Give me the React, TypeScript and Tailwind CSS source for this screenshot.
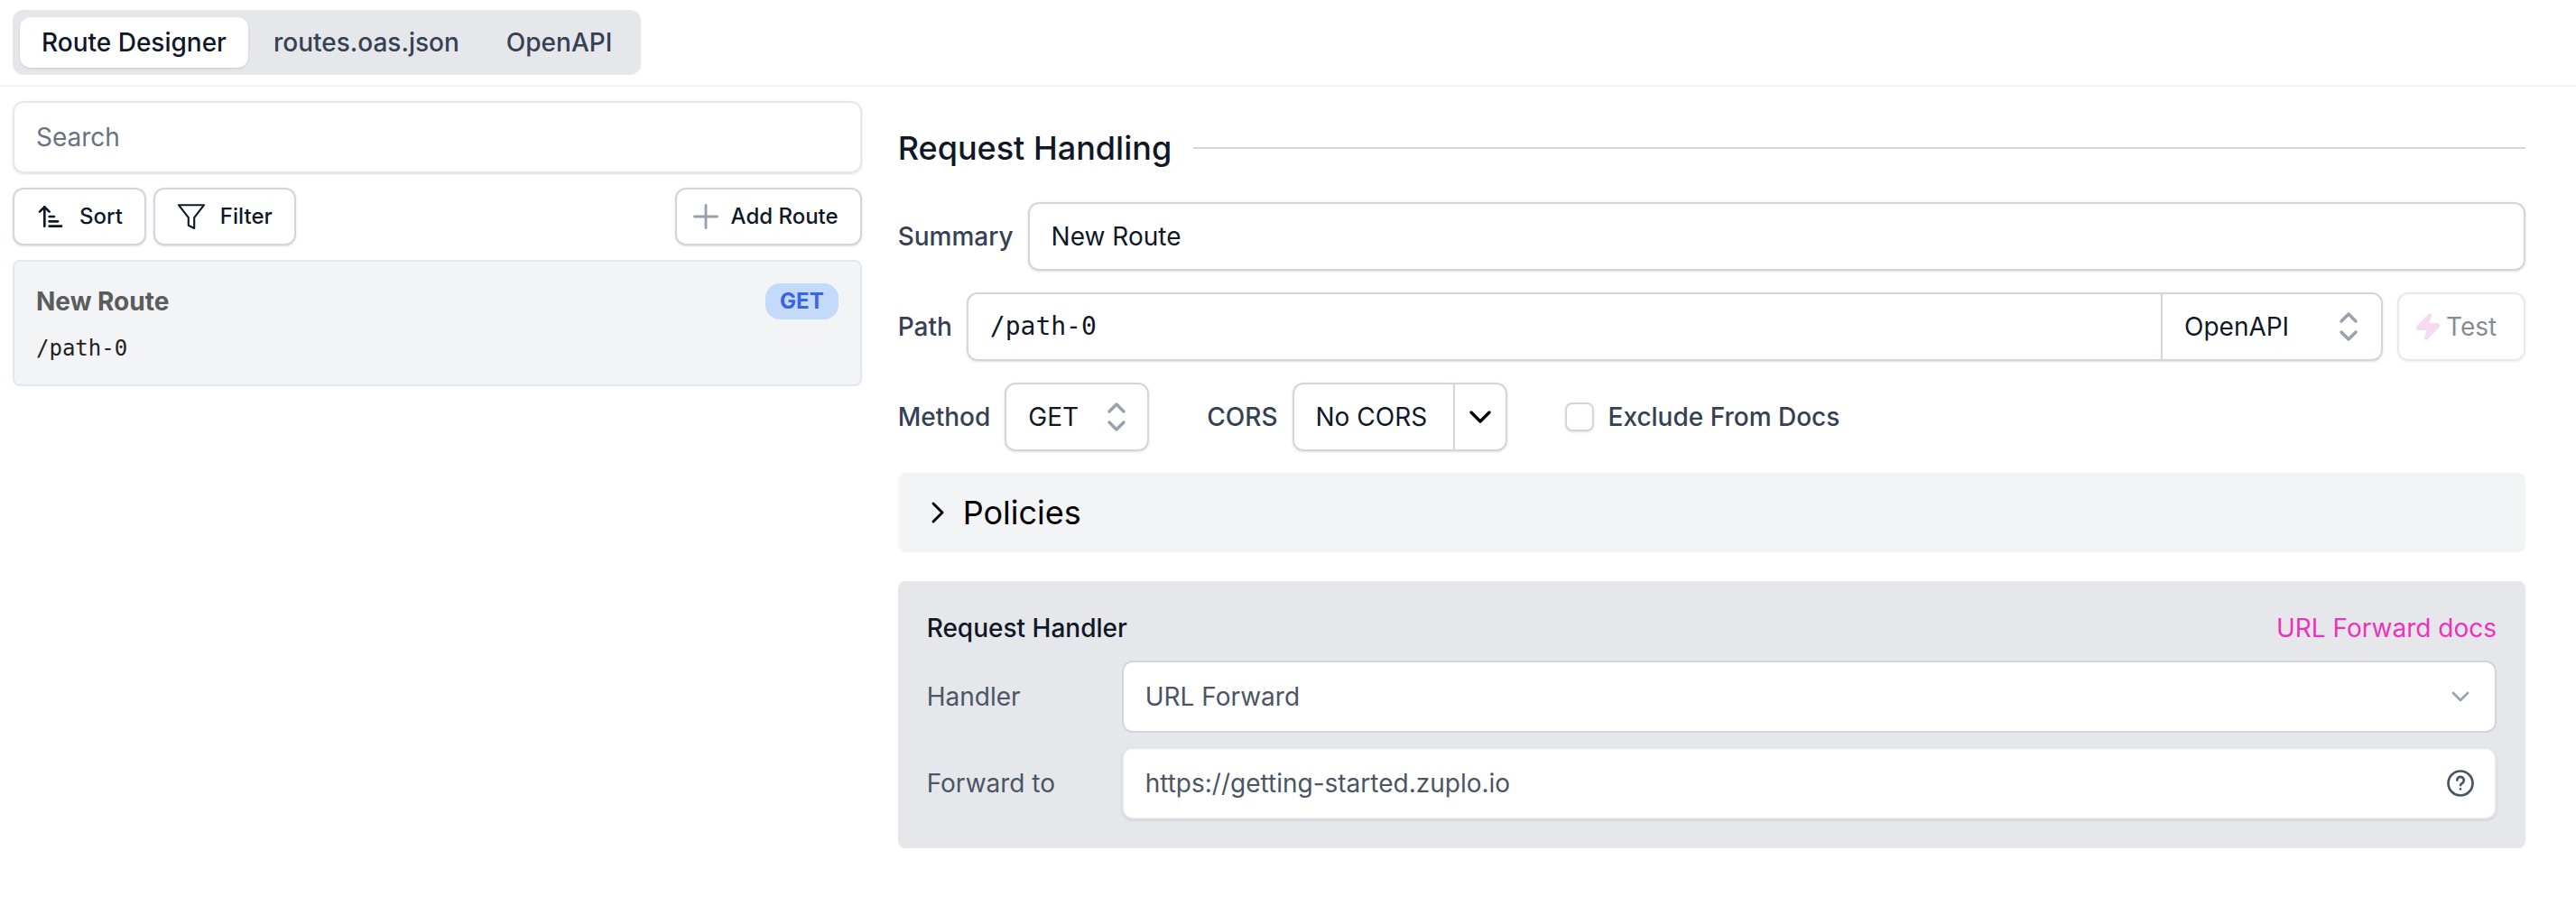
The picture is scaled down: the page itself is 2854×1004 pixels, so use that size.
import { useState } from 'react'
import type { ReactNode } from 'react'
import { ArrowUpNarrowWide, ChevronDown, ChevronRight, Zap } from 'lucide-react'

const tabs = ['Route Designer', 'routes.oas.json', 'OpenAPI']

const Selector = () => (
  <svg
    viewBox="0 0 24 24"
    fill="none"
    stroke="currentColor"
    strokeWidth="1.75"
    strokeLinecap="round"
    strokeLinejoin="round"
    className="pointer-events-none absolute right-3 top-1/2 h-12 w-12 -translate-y-1/2 text-gray-400"
  >
    <path d="M8 9l4-4 4 4M16 15l-4 4-4-4" />
  </svg>
)

const FilterIcon = () => (
  <svg viewBox="0 0 15 15" fill="none" stroke="currentColor" strokeLinejoin="round" className="mr-4 h-8 w-8">
    <path d="M.9 1.5h13.2L9 8v5.6l-3-1.5V8z" />
  </svg>
)

const PlusIcon = () => (
  <svg viewBox="0 0 24 24" fill="none" stroke="currentColor" strokeWidth="1.75" strokeLinecap="round" className="-ml-3 mr-2 h-10 w-10 text-gray-400">
    <path d="M12 4.5v15m7.5-7.5h-15" />
  </svg>
)

const ToolButton = ({ icon, children }: { icon: ReactNode; children: ReactNode }) => (
  <button className="flex h-16 items-center rounded-xl border-2 border-gray-300 bg-white px-6 text-2xl font-medium text-gray-900 shadow-sm">
    {icon}
    {children}
  </button>
)

const App = () => {
  const [tab, setTab] = useState(tabs[0]);
  const [summary, setSummary] = useState('New Route');
  const [path, setPath] = useState('/path-0');
  const [forwardTo, setForwardTo] = useState('https://getting-started.zuplo.io');

  return (
    <div className="bg-white font-['Inter',sans-serif] text-[28px] leading-10 text-gray-900">
      <header className="flex border-b-2 border-gray-100 px-3.5 py-[11px]">
        <nav className="flex gap-1 rounded-xl bg-gray-200 p-2">
          {tabs.map((t) => (
            <button
              key={t}
              onClick={() => setTab(t)}
              className={t === tab
                ? 'h-14 rounded-xl bg-white px-6 font-medium text-gray-900 shadow-sm'
                : 'h-14 rounded-xl px-6 font-medium text-gray-700'}
            >
              {t}
            </button>
          ))}
        </nav>
      </header>

      <div className="flex">
        <aside className="w-[33.45%] shrink-0 pt-4 pl-3.5">
          <input
            type="search"
            placeholder="Search"
            aria-label="Search"
            className="h-20 w-full rounded-xl border-2 border-gray-200 px-6 shadow-sm placeholder:text-gray-500"
          />
          <div className="mt-4 flex gap-2">
            <ToolButton icon={<ArrowUpNarrowWide className="mr-4 h-8 w-8" />}>Sort</ToolButton>
            <ToolButton icon={<FilterIcon />}>Filter</ToolButton>
            <div className="ml-auto">
              <ToolButton icon={<PlusIcon />}>Add Route</ToolButton>
            </div>
          </div>
          <div className="mt-4 rounded-lg border-2 border-slate-200 bg-gray-100 px-6 pt-6 pb-5">
            <div className="flex items-center justify-between">
              <span className="font-bold text-[#5c5c5c]">New Route</span>
              <span className="rounded-2xl bg-[#c3dafb] px-4 text-2xl leading-10 font-bold text-[#3b63e6]">GET</span>
            </div>
            <p className="mt-3 font-['DejaVu_Sans_Mono',monospace] text-2xl leading-10 text-[#222]">/path-0</p>
          </div>
        </aside>

        <main className="flex min-w-0 flex-1 flex-col gap-6 pt-11 pr-14 pl-10">
          <div className="mb-3 flex h-12 items-center gap-6">
            <h2 className="text-4xl font-medium">Request Handling</h2>
            <div className="h-0.5 flex-1 bg-gray-300" />
          </div>

          <div className="flex items-center gap-4">
            <label htmlFor="summary" className="font-medium text-gray-700">Summary</label>
            <input
              id="summary"
              value={summary}
              onChange={(e) => setSummary(e.target.value)}
              className="h-19 min-w-0 flex-1 rounded-xl border-2 border-gray-300 px-6 shadow-sm"
            />
          </div>

          <div className="flex items-center gap-4">
            <label htmlFor="path" className="font-medium text-gray-700">Path</label>
            <div className="flex h-19 min-w-0 flex-1 rounded-xl border-2 border-gray-300 shadow-sm">
              <input
                id="path"
                value={path}
                onChange={(e) => setPath(e.target.value)}
                className="min-w-0 flex-1 rounded-l-xl px-6 font-['DejaVu_Sans_Mono',monospace]"
              />
              <div className="relative w-[244px] border-l-2 border-gray-300">
                <select aria-label="Path format" className="h-full w-full appearance-none rounded-r-xl px-6">
                  <option>OpenAPI</option>
                </select>
                <Selector />
              </div>
            </div>
            <button disabled className="flex h-19 w-[142px] items-center gap-1 rounded-xl border-2 border-gray-300 px-4 opacity-50 shadow-sm">
              <Zap className="h-8 w-8 fill-current text-[#edb9e5]" />
              Test
            </button>
          </div>

          <div className="flex items-center gap-4">
            <label htmlFor="method" className="font-medium text-gray-700">Method</label>
            <div className="relative h-19 w-40">
              <select id="method" className="h-full w-full appearance-none rounded-xl border-2 border-gray-300 px-6 shadow-sm">
                <option>GET</option>
              </select>
              <Selector />
            </div>
            <span className="ml-12 font-medium text-gray-700">CORS</span>
            <div className="flex h-19 rounded-xl border-2 border-gray-300 shadow-sm">
              <button className="w-44 px-6 text-left">No CORS</button>
              <button aria-label="CORS options" className="flex w-[58px] items-center justify-center border-l-2 border-gray-300 text-black">
                <ChevronDown className="h-10 w-10" />
              </button>
            </div>
            <input
              id="exclude"
              type="checkbox"
              className="ml-12 h-8 w-8 appearance-none rounded-lg border-2 border-gray-300 shadow-sm checked:bg-blue-600"
            />
            <label htmlFor="exclude" className="font-medium text-gray-700">Exclude From Docs</label>
          </div>

          <button className="flex h-22 items-center gap-2 rounded-lg bg-gray-100 px-6 text-4xl text-black">
            <ChevronRight strokeWidth={1.75} className="h-10 w-10" />
            Policies
          </button>

          <section className="mt-2 rounded-lg bg-gray-200 p-8">
            <div className="mb-4 flex items-center justify-between">
              <h3 className="font-medium">Request Handler</h3>
              <a href="#docs" className="text-[#ed32bd]">URL Forward docs</a>
            </div>
            <div className="grid grid-cols-[200px_1fr] items-center gap-4 text-gray-600">
              <label htmlFor="handler">Handler</label>
              <div className="relative h-20">
                <select id="handler" className="h-full w-full appearance-none rounded-xl border-2 border-gray-300 bg-white px-6">
                  <option>URL Forward</option>
                </select>
                <ChevronDown className="pointer-events-none absolute right-6 top-1/2 h-8 w-8 -translate-y-1/2 text-gray-400" />
              </div>
              <label htmlFor="forward">Forward to</label>
              <div className="flex h-20 items-center rounded-xl border-2 border-gray-200 bg-white pr-5 shadow-sm">
                <input
                  id="forward"
                  value={forwardTo}
                  onChange={(e) => setForwardTo(e.target.value)}
                  className="min-w-0 flex-1 px-6"
                />
                <button aria-label="Help">
                  <svg viewBox="0 0 24 24" fill="none" stroke="currentColor" strokeWidth="1.8" strokeLinecap="round" className="h-9 w-9">
                    <circle cx="12" cy="12" r="9" />
                    <path d="M9.5 9.7a2.5 2.5 0 1 1 4 2c-.9.6-1.5 1-1.5 1.7M12 16.3h.01" />
                  </svg>
                </button>
              </div>
            </div>
          </section>
        </main>
      </div>
    </div>
  );
};

export default App
